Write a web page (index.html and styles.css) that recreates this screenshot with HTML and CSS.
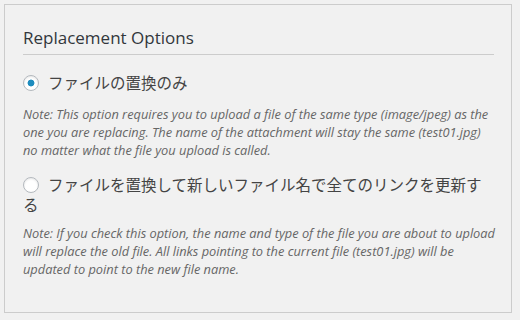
FILE: index.html
```html
<!DOCTYPE html>
<html lang="ja">
  <head>
    <meta charset="UTF-8" />
    <meta name="viewport" content="width=device-width, initial-scale=1.0" />
    <title>Replacement Options</title>
    <link rel="stylesheet" href="styles.css">
  </head>

  <body>
    <div class="options-box">
      <h2 class="options-title">Replacement Options</h2>

      <label class="option">
        <input type="radio" name="replace_type" value="replace" checked />ファイルの置換のみ
      </label>
      <p class="note">
        Note: This option requires you to upload a file of the same type (image/jpeg) as the<br />
        one you are replacing. The name of the attachment will stay the same (test01.jpg)<br />
        no matter what the file you upload is called.
      </p>

      <label class="option option-second">
        <input type="radio" name="replace_type" value="replace_and_search" />ファイルを置換して新しいファイル名で全てのリンクを更新する
      </label>
      <p class="note note-second">
        Note: If you check this option, the name and type of the file you are about to upload<br />
        will replace the old file. All links pointing to the current file (test01.jpg) will be<br />
        updated to point to the new file name.
      </p>
    </div>
  </body>
</html>
```

FILE: styles.css
```css
* {
  margin: 0;
  padding: 0;
  box-sizing: border-box;
}

body {
  margin: 4px;
  background-color: #f1f1f1;
  font-family: "Open Sans", "Noto Sans CJK JP", sans-serif;
  color: #444;
}

.options-box {
  width: 508px;
  height: 309px;
  padding: 0 17px 0 18px;
  border: 1px solid #ccc;
  background-color: #f1f1f1;
}

.options-title {
  padding: 21px 0 4px;
  border-bottom: 1px solid #ccc;
  font-size: 17px;
  font-weight: normal;
  line-height: 24px;
  color: #32373c;
}

.option {
  display: block;
  margin-top: 17px;
  font-family: "Noto Sans CJK JP", sans-serif;
  font-size: 15.5px;
  line-height: 20px;
  color: #444;
}

.option input {
  -webkit-appearance: none;
  appearance: none;
  display: inline-block;
  width: 16px;
  height: 16px;
  margin: 0 9px 0 0;
  border: 1px solid #b4b9be;
  border-radius: 50%;
  background: #fff;
  box-shadow: inset 0 1px 2px rgba(0, 0, 0, 0.1);
  vertical-align: -2px;
}

.option input:checked {
  background: radial-gradient(circle, #1e8cbe 0, #1e8cbe 3px, #fff 3.8px);
}

.note {
  margin: 13px -8px 0 0;
  font-size: 12.8px;
  font-style: italic;
  line-height: 18px;
  color: #666;
}

.option-second {
  margin-top: 15px;
}

.note-second {
  margin-top: 10px;
}
```
